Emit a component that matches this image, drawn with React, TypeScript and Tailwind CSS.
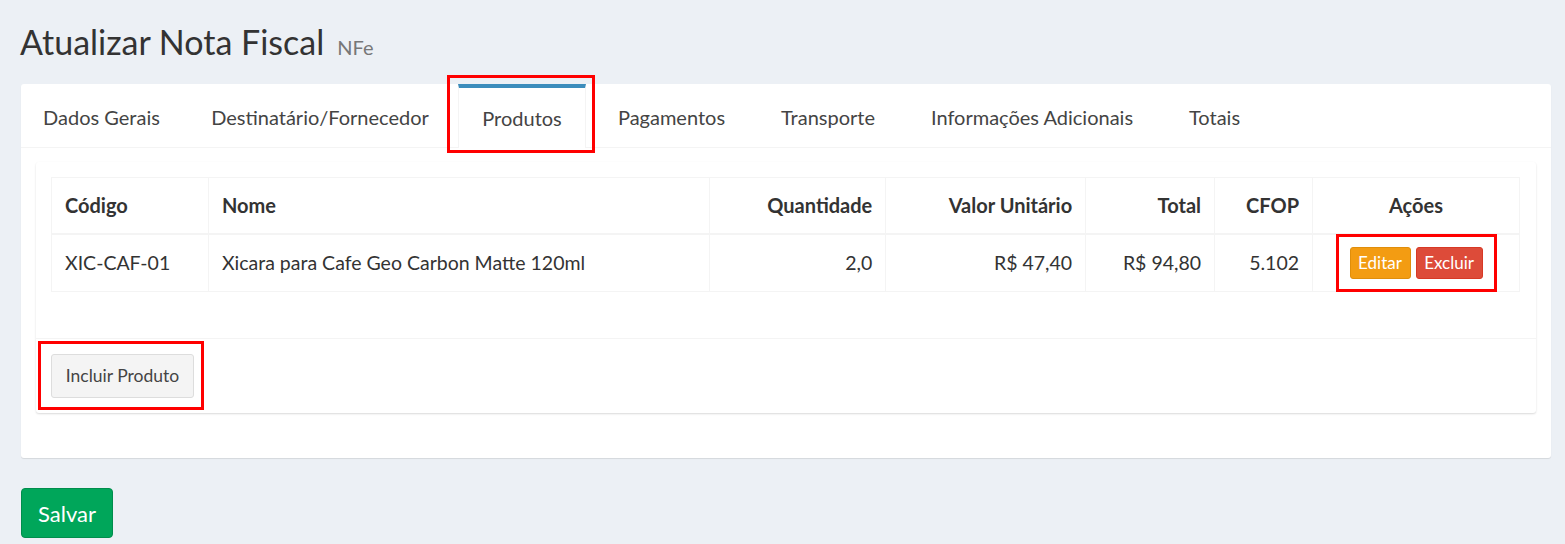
const tabs = [
  { label: "Dados Gerais", w: "w-[161px]" },
  { label: "Destinatário/Fornecedor", w: "w-[262px]" },
  { label: "Produtos", w: "w-[128px]", active: true },
  { label: "Pagamentos", w: "w-[157px]" },
  { label: "Transporte", w: "w-[142px]" },
  { label: "Informações Adicionais", w: "w-[252px]" },
  { label: "Totais", w: "w-[99px]" },
]

export default function App() {
  return (
    <div className="relative min-h-[544px] bg-[#ecf0f5] pt-[22px] font-['Lato',sans-serif] text-[#333]">
      <h1 className="ml-[20px] flex items-baseline h-[40px] text-[34px] leading-[40px] text-[#333]">
        Atualizar Nota Fiscal
        <small className="ml-[13px] text-[20px] text-[#777]">NFe</small>
      </h1>

      <div className="ml-[21px] mt-[22px] w-[1530px] rounded-[3px] bg-white shadow-[0_1px_1px_rgba(0,0,0,0.1)]">
        <div className="flex h-[64px] gap-[7px] border-b border-[#f4f4f4]">
          {tabs.map((t) =>
            t.active ? (
              <div
                key={t.label}
                className={`${t.w} -mb-px flex items-center justify-center border-x border-t-4 border-x-[#f4f4f4] border-t-[#3c8dbc] bg-white pb-[1px] text-[20px] text-[#444]`}
              >
                {t.label}
              </div>
            ) : (
              <div key={t.label} className={`${t.w} flex items-center justify-center pt-[3px] text-[20px] text-[#444]`}>
                {t.label}
              </div>
            )
          )}
        </div>

        <div className="px-[15px] pt-[14px] pb-[45px]">
          <div className="rounded-[3px] bg-white shadow-[0_1px_2px_rgba(0,0,0,0.15)]">
            <div className="px-[15px] pt-[15px] pb-[46px]">
              <table className="w-[1469px] border-collapse border border-[#f4f4f4] text-[19.5px]">
                <thead>
                  <tr className="h-[56px] border-b-2 border-[#f4f4f4] text-[20px] font-bold">
                    <th className="w-[157px] border-r border-[#f4f4f4] px-[13px] text-left">Código</th>
                    <th className="w-[502px] border-r border-[#f4f4f4] px-[13px] text-left">Nome</th>
                    <th className="w-[176px] border-r border-[#f4f4f4] px-[13px] text-right">Quantidade</th>
                    <th className="w-[200px] border-r border-[#f4f4f4] px-[13px] text-right">Valor Unitário</th>
                    <th className="w-[129px] border-r border-[#f4f4f4] px-[13px] text-right">Total</th>
                    <th className="w-[98px] border-r border-[#f4f4f4] px-[13px] text-right">CFOP</th>
                    <th className="w-[207px] px-[13px] text-center">Ações</th>
                  </tr>
                </thead>
                <tbody>
                  <tr className="h-[58px]">
                    <td className="border-r border-[#f4f4f4] px-[13px]">XIC-CAF-01</td>
                    <td className="border-r border-[#f4f4f4] px-[13px]">Xicara para Cafe Geo Carbon Matte 120ml</td>
                    <td className="border-r border-[#f4f4f4] px-[13px] text-right">2,0</td>
                    <td className="border-r border-[#f4f4f4] px-[13px] text-right">R$ 47,40</td>
                    <td className="border-r border-[#f4f4f4] px-[13px] text-right">R$ 94,80</td>
                    <td className="border-r border-[#f4f4f4] px-[13px] text-right">5.102</td>
                    <td className="px-[13px]">
                      <div className="flex justify-center gap-[5px]">
                        <button className="h-[32px] w-[61px] rounded-[3px] border border-[#e08e0b] bg-[#f39c12] text-[17px] text-white">
                          Editar
                        </button>
                        <button className="h-[32px] w-[67px] rounded-[3px] border border-[#d73925] bg-[#dd4b39] text-[17px] text-white">
                          Excluir
                        </button>
                      </div>
                    </td>
                  </tr>
                </tbody>
              </table>
            </div>
            <div className="border-t border-[#f4f4f4] p-[15px]">
              <button className="h-[44px] w-[143px] rounded-[3px] border border-[#ddd] bg-[#f4f4f4] text-[17.5px] text-[#444]">
                Incluir Produto
              </button>
            </div>
          </div>
        </div>
      </div>

      <button className="ml-[21px] mt-[30px] h-[50px] w-[92px] rounded-[4px] border border-[#008d4c] bg-[#00a65a] text-[22px] text-white">
        Salvar
      </button>

      {/* anotações em vermelho */}
      <div className="absolute left-[447px] top-[75px] h-[78px] w-[148px] border-[3px] border-[#ff0000]" />
      <div className="absolute left-[1336px] top-[234px] h-[58px] w-[161px] border-[3px] border-[#ff0000]" />
      <div className="absolute left-[38px] top-[341px] h-[69px] w-[166px] border-[3px] border-[#ff0000]" />
    </div>
  )
}
